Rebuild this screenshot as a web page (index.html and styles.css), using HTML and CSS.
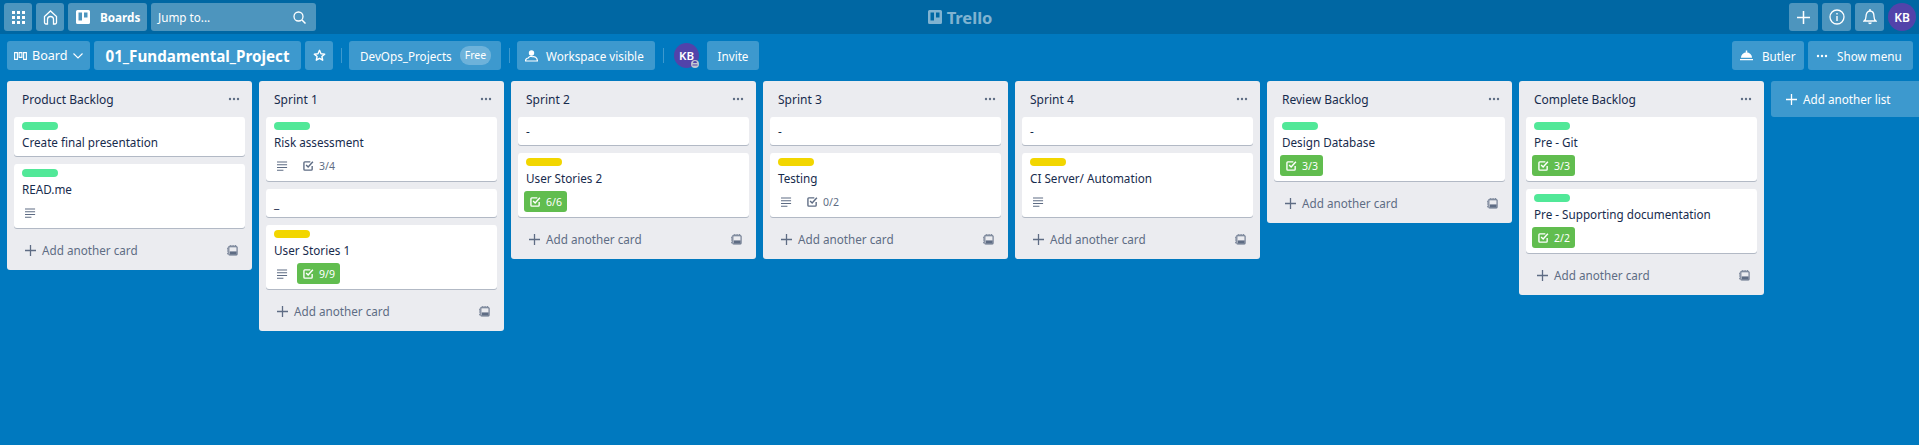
FILE: index.html
```html
<!DOCTYPE html>
<html lang="en">
    <head>
        <meta charset="UTF-8">
        <title>01_Fundamental_Project | Trello</title>
        <link rel="stylesheet" href="styles.css">
    </head>
    <body>
        <svg class="defs" width="0" height="0">
            <symbol id="i-desc" viewBox="0 0 12 12"><path d="M0 1h11v1.3H0zM0 4h11v1.3H0zM0 7h11v1.3H0zM0 10h7v1.3H0z" fill="currentColor"/></symbol>
            <symbol id="i-check" viewBox="0 0 12 12"><path d="M10 6.5V10a1 1 0 0 1-1 1H2a1 1 0 0 1-1-1V3a1 1 0 0 1 1-1h6" fill="none" stroke="currentColor" stroke-width="1.5"/><path d="M3.4 5.4 5.6 7.6 10.8 2" fill="none" stroke="currentColor" stroke-width="1.6"/></symbol>
            <symbol id="i-plus" viewBox="0 0 12 12"><path d="M5.3 0h1.4v5.3H12v1.4H6.7V12H5.3V6.7H0V5.3h5.3z" fill="currentColor"/></symbol>
            <symbol id="i-dots" viewBox="0 0 12 4"><circle cx="2" cy="2" r="1.2" fill="currentColor"/><circle cx="6" cy="2" r="1.2" fill="currentColor"/><circle cx="10" cy="2" r="1.2" fill="currentColor"/></symbol>
            <symbol id="i-template" viewBox="0 0 12 12"><path d="M2 2h8.500a1 1 0 0 1 .5.500v7.500a1 1 0 0 1-1 1H3a1 1 0 0 1-1-1z" fill="none" stroke="currentColor" stroke-width="1.100"/><path d="M3 7h7.500v3.500H3z" fill="currentColor"/><path d="M0 3h1v1H0zM0 5h1v1H0zM0 7h1v1H0zM0 9h1v1H0zM3 0h1v1H3zM5 0h1v1H5zM7 0h1v1H7zM9 0h1v1H9z" fill="currentColor"/></symbol>
            <symbol id="i-logo" viewBox="0 0 14 14"><path fill-rule="evenodd" d="M1.5 0h11A1.5 1.5 0 0 1 14 1.500v11a1.500 1.500 0 0 1-1.500 1.500h-11A1.500 1.500 0 0 1 0 12.500v-11A1.500 1.500 0 0 1 1.500 0zM2.500 2.500v8h3.500v-8zM8 2.500v5h3.500v-5z" fill="currentColor"/></symbol>
        </svg>

        <header class="topbar">
            <div class="topbar-side">
                <a class="top-btn square">
                    <svg width="13" height="13" viewBox="0 0 13 13"><path d="M0 0h3v3H0zM5 0h3v3H5zM10 0h3v3h-3zM0 5h3v3H0zM5 5h3v3H5zM10 5h3v3h-3zM0 10h3v3H0zM5 10h3v3H5zM10 10h3v3h-3z" fill="#fff"/></svg>
                </a>
                <a class="top-btn square">
                    <svg width="15" height="15" viewBox="0 0 15 15"><path d="M4.500 14H3a1.500 1.500 0 0 1-1.500-1.500V6.500L7.500 1l6 5.500v6A1.500 1.500 0 0 1 12 14h-1.500V9.500a3 3 0 0 0-6 0z" fill="none" stroke="#fff" stroke-width="1.300"/></svg>
                </a>
                <a class="top-btn boards">
                    <svg class="boards-icon" width="14" height="14"><use href="#i-logo"/></svg>
                    <b>Boards</b>
                </a>
                <div class="search">
                    <span>Jump to...</span>
                    <svg width="13" height="13" viewBox="0 0 13 13"><circle cx="5.500" cy="5.500" r="4.500" fill="none" stroke="#fff" stroke-width="1.300"/><path d="M9 9l3.500 3.500" stroke="#fff" stroke-width="1.500"/></svg>
                </div>
            </div>
            <div class="brand">
                <svg width="14" height="14"><use href="#i-logo"/></svg>
                <span>Trello</span>
            </div>
            <div class="topbar-side right">
                <a class="top-btn square wide"><svg width="13" height="13"><use href="#i-plus"/></svg></a>
                <a class="top-btn square wide">
                    <svg width="16" height="16" viewBox="0 0 16 16"><circle cx="8" cy="8" r="7" fill="none" stroke="#fff" stroke-width="1.300"/><path d="M7.300 7h1.400v5H7.300zM7.300 4h1.400v1.500H7.300z" fill="#fff"/></svg>
                </a>
                <a class="top-btn square wide">
                    <svg width="14" height="16" viewBox="0 0 14 16"><path d="M1 12c1.500-1 2-2 2-4.500C3 4.500 4.500 2 7 2s4 2.500 4 5.500c0 2.500.5 3.500 2 4.500z" fill="none" stroke="#fff" stroke-width="1.300"/><path d="M5.200 13.500h3.600a1.800 1.800 0 0 1-3.600 0zM6.300 0h1.400v2H6.300z" fill="#fff"/></svg>
                </a>
                <span class="avatar">KB</span>
            </div>
        </header>

        <nav class="boardbar">
            <div class="boardbar-side">
                <a class="bar-btn board-switch">
                    <svg width="13" height="8" viewBox="0 0 13 8"><path d="M.6.600h2.800v6.800H.6zM5.100.600h2.800v4.800H5.100zM9.600.600h2.800v6.800H9.600z" fill="none" stroke="#fff" stroke-width="1.100"/></svg>
                    <span>Board</span>
                    <svg width="10" height="6" viewBox="0 0 10 6"><path d="M.5.500 5 5 9.500.500" fill="none" stroke="#fff" stroke-width="1.100"/></svg>
                </a>
                <a class="bar-btn board-name">01_Fundamental_Project</a>
                <a class="bar-btn star">
                    <svg width="13" height="13" viewBox="0 0 13 13"><path d="M6.500 1.300 8 4.700l3.700.4-2.800 2.400.8 3.700-3.200-1.900-3.200 1.900.8-3.700L1.300 5.100 5 4.700z" fill="none" stroke="#fff" stroke-width="1.400" stroke-linejoin="round"/></svg>
                </a>
                <i class="sep"></i>
                <a class="bar-btn workspace">DevOps_Projects <span class="free">Free</span></a>
                <i class="sep"></i>
                <a class="bar-btn visible">
                    <svg width="13" height="12" viewBox="0 0 13 12"><circle cx="6.500" cy="3" r="2.700" fill="#fff"/><path d="M.6 11c-.2-1.800 1.200-3 2.600-3 .6-1.400 2.900-2.200 4.300-1.300 1.700-.6 5 .9 4.900 4.300z" fill="none" stroke="#fff" stroke-width="1.200"/></svg>
                    <span>Workspace visible</span>
                </a>
                <i class="sep"></i>
                <span class="member">
                    <span class="avatar small">KB</span>
                    <svg class="member-badge" width="8" height="8" viewBox="0 0 8 8"><circle cx="4" cy="4" r="4" fill="#c1c7d0"/><path d="M2 3a2 2 0 0 1 4 0zM1.500 4.500h5v1h-5z" fill="#5243aa"/></svg>
                </span>
                <a class="bar-btn invite">Invite</a>
            </div>
            <div class="boardbar-side">
                <a class="bar-btn butler">
                    <svg width="13" height="12" viewBox="0 0 14 12"><path d="M1 8a6 6 0 0 1 12 0zM6.200 0h1.600v2H6.200zM0 9.300h14v1.200H0z" fill="#fff"/></svg>
                    <span>Butler</span>
                </a>
                <a class="bar-btn show-menu">
                    <svg width="12" height="4"><use href="#i-dots"/></svg>
                    <span>Show menu</span>
                </a>
            </div>
        </nav>

        <main class="board">
            <section class="list">
                <div class="list-head"><h2>Product Backlog</h2><svg width="12" height="4"><use href="#i-dots"/></svg></div>
                <div class="card">
                    <div class="label green"></div>
                    <div class="title">Create final presentation</div>
                </div>
                <div class="card">
                    <div class="label green"></div>
                    <div class="title">READ.me</div>
                    <div class="badges"><span class="badge-desc"><svg width="11" height="12"><use href="#i-desc"/></svg></span></div>
                </div>
                <div class="list-foot"><svg class="add-plus" width="11" height="11"><use href="#i-plus"/></svg><span>Add another card</span><svg class="tpl" width="11" height="11"><use href="#i-template"/></svg></div>
            </section>

            <section class="list">
                <div class="list-head"><h2>Sprint 1</h2><svg width="12" height="4"><use href="#i-dots"/></svg></div>
                <div class="card">
                    <div class="label green"></div>
                    <div class="title">Risk assessment</div>
                    <div class="badges">
                        <span class="badge-desc"><svg width="11" height="12"><use href="#i-desc"/></svg></span>
                        <span class="badge-check"><svg width="11" height="11"><use href="#i-check"/></svg>3/4</span>
                    </div>
                </div>
                <div class="card">
                    <div class="title">_</div>
                </div>
                <div class="card">
                    <div class="label yellow"></div>
                    <div class="title">User Stories 1</div>
                    <div class="badges">
                        <span class="badge-desc"><svg width="11" height="12"><use href="#i-desc"/></svg></span>
                        <span class="badge-check done"><svg width="11" height="11"><use href="#i-check"/></svg>9/9</span>
                    </div>
                </div>
                <div class="list-foot"><svg class="add-plus" width="11" height="11"><use href="#i-plus"/></svg><span>Add another card</span><svg class="tpl" width="11" height="11"><use href="#i-template"/></svg></div>
            </section>

            <section class="list">
                <div class="list-head"><h2>Sprint 2</h2><svg width="12" height="4"><use href="#i-dots"/></svg></div>
                <div class="card">
                    <div class="title">-</div>
                </div>
                <div class="card">
                    <div class="label yellow"></div>
                    <div class="title">User Stories 2</div>
                    <div class="badges">
                        <span class="badge-check done"><svg width="11" height="11"><use href="#i-check"/></svg>6/6</span>
                    </div>
                </div>
                <div class="list-foot"><svg class="add-plus" width="11" height="11"><use href="#i-plus"/></svg><span>Add another card</span><svg class="tpl" width="11" height="11"><use href="#i-template"/></svg></div>
            </section>

            <section class="list">
                <div class="list-head"><h2>Sprint 3</h2><svg width="12" height="4"><use href="#i-dots"/></svg></div>
                <div class="card">
                    <div class="title">-</div>
                </div>
                <div class="card">
                    <div class="label yellow"></div>
                    <div class="title">Testing</div>
                    <div class="badges">
                        <span class="badge-desc"><svg width="11" height="12"><use href="#i-desc"/></svg></span>
                        <span class="badge-check"><svg width="11" height="11"><use href="#i-check"/></svg>0/2</span>
                    </div>
                </div>
                <div class="list-foot"><svg class="add-plus" width="11" height="11"><use href="#i-plus"/></svg><span>Add another card</span><svg class="tpl" width="11" height="11"><use href="#i-template"/></svg></div>
            </section>

            <section class="list">
                <div class="list-head"><h2>Sprint 4</h2><svg width="12" height="4"><use href="#i-dots"/></svg></div>
                <div class="card">
                    <div class="title">-</div>
                </div>
                <div class="card">
                    <div class="label yellow"></div>
                    <div class="title">CI Server/ Automation</div>
                    <div class="badges"><span class="badge-desc"><svg width="11" height="12"><use href="#i-desc"/></svg></span></div>
                </div>
                <div class="list-foot"><svg class="add-plus" width="11" height="11"><use href="#i-plus"/></svg><span>Add another card</span><svg class="tpl" width="11" height="11"><use href="#i-template"/></svg></div>
            </section>

            <section class="list">
                <div class="list-head"><h2>Review Backlog</h2><svg width="12" height="4"><use href="#i-dots"/></svg></div>
                <div class="card">
                    <div class="label green"></div>
                    <div class="title">Design Database</div>
                    <div class="badges">
                        <span class="badge-check done"><svg width="11" height="11"><use href="#i-check"/></svg>3/3</span>
                    </div>
                </div>
                <div class="list-foot"><svg class="add-plus" width="11" height="11"><use href="#i-plus"/></svg><span>Add another card</span><svg class="tpl" width="11" height="11"><use href="#i-template"/></svg></div>
            </section>

            <section class="list">
                <div class="list-head"><h2>Complete Backlog</h2><svg width="12" height="4"><use href="#i-dots"/></svg></div>
                <div class="card">
                    <div class="label green"></div>
                    <div class="title">Pre - Git</div>
                    <div class="badges">
                        <span class="badge-check done"><svg width="11" height="11"><use href="#i-check"/></svg>3/3</span>
                    </div>
                </div>
                <div class="card">
                    <div class="label green"></div>
                    <div class="title">Pre - Supporting documentation</div>
                    <div class="badges">
                        <span class="badge-check done"><svg width="11" height="11"><use href="#i-check"/></svg>2/2</span>
                    </div>
                </div>
                <div class="list-foot"><svg class="add-plus" width="11" height="11"><use href="#i-plus"/></svg><span>Add another card</span><svg class="tpl" width="11" height="11"><use href="#i-template"/></svg></div>
            </section>

            <a class="add-list"><svg width="11" height="11"><use href="#i-plus"/></svg>Add another list</a>
        </main>
    </body>
</html>
```

FILE: styles.css
```css
body {
    margin: 0;
    height: 445px;
    overflow: hidden;
    background-color: #0079bf;
    color: #172b4d;
    font-family: "Noto Sans", "Open Sans", sans-serif;
    font-size: 11.7px;
}

a {
    color: #fff;
}

.defs {
    position: absolute;
}

/* top bar */
.topbar {
    display: grid;
    grid-template-columns: 1fr auto 1fr;
    align-items: center;
    height: 34px;
    padding: 0 3px 0 4px;
    background-color: #0067a3;
}

.topbar-side {
    display: flex;
    align-items: center;
    gap: 4px;
}

.topbar-side.right {
    justify-content: flex-end;
}

.top-btn {
    display: flex;
    align-items: center;
    height: 28px;
    border-radius: 3px;
    background-color: rgba(255, 255, 255, 0.3);
    color: #fff;
}

.square {
    justify-content: center;
    width: 28px;
}

.wide {
    width: 29px;
}

.boards {
    width: 79px;
    box-sizing: border-box;
    padding-left: 8px;
}

.boards-icon {
    margin-right: 10px;
}

.search {
    display: flex;
    align-items: center;
    justify-content: space-between;
    width: 165px;
    height: 28px;
    box-sizing: border-box;
    padding: 0 10px 0 7px;
    border-radius: 3px;
    background-color: rgba(255, 255, 255, 0.3);
    color: #fff;
}

.brand {
    display: flex;
    align-items: center;
    gap: 5px;
    color: rgba(255, 255, 255, 0.5);
    font-size: 16.5px;
    font-weight: 700;
}

.avatar {
    display: flex;
    align-items: center;
    justify-content: center;
    width: 28px;
    height: 28px;
    border-radius: 50%;
    background-color: #5243aa;
    color: #fff;
    font-size: 12px;
    font-weight: 600;
}

.avatar.small {
    width: 25px;
    height: 25px;
    font-size: 11.5px;
}

/* board bar */
.boardbar {
    display: flex;
    justify-content: space-between;
    padding: 7px 6px 11px 7px;
}

.boardbar-side {
    display: flex;
    align-items: center;
    gap: 4px;
}

.bar-btn {
    display: flex;
    align-items: center;
    height: 29px;
    box-sizing: border-box;
    border-radius: 3px;
    background-color: rgba(255, 255, 255, 0.24);
}

.board-switch {
    width: 83px;
    padding-left: 7px;
    gap: 5px;
}

.board-switch span {
    width: 32px;
    margin-right: 4px;
    font-size: 12.6px;
}

.board-name {
    justify-content: center;
    width: 207px;
    font-size: 15.2px;
    font-weight: 700;
}

.star {
    justify-content: center;
    width: 28px;
}

.sep {
    width: 1px;
    height: 15px;
    margin: 0 3px 0 4px;
    background-color: rgba(255, 255, 255, 0.24);
}

.workspace {
    justify-content: space-between;
    width: 152px;
    padding: 0 10px 0 11px;
}

.free {
    width: 31px;
    border-radius: 9px;
    background-color: rgba(255, 255, 255, 0.25);
    font-size: 10.5px;
    line-height: 19px;
    text-align: center;
}

.visible {
    width: 138px;
    padding-left: 8px;
    gap: 8px;
}

.member {
    position: relative;
    display: flex;
    margin: 0 4px 0 3px;
}

.member-badge {
    position: absolute;
    right: 0;
    bottom: 0;
}

.invite {
    justify-content: center;
    width: 52px;
}

.butler {
    width: 72px;
    padding-left: 8px;
    gap: 9px;
}

.show-menu {
    width: 105px;
    padding-left: 8px;
    gap: 9px;
}

/* lists */
.board {
    display: flex;
    align-items: flex-start;
    gap: 7px;
    padding-left: 7px;
}

.list {
    flex: 0 0 245px;
    box-sizing: border-box;
    padding: 0 7px;
    border-radius: 3px;
    background-color: #ebecf0;
}

.list-head {
    display: flex;
    align-items: center;
    justify-content: space-between;
    height: 36px;
    padding: 0 5px 0 8px;
    color: #5e6c84;
}

.list-head h2 {
    margin: 0;
    color: #172b4d;
    font-size: 12px;
    font-weight: 400;
}

.card {
    margin-bottom: 8px;
    padding: 6px 8px 4px;
    border-radius: 3px;
    background-color: #fff;
    box-shadow: 0 1px 0 rgba(9, 30, 66, 0.25);
}

.label {
    width: 36px;
    height: 8px;
    margin: -1px 0 4px;
    border-radius: 4px;
}

.green {
    background-color: #51e898;
}

.yellow {
    background-color: #f2d600;
}

.title {
    margin: -1px 0 1px;
    line-height: 18px;
}

.badges {
    display: flex;
    align-items: center;
    height: 21px;
    margin: 4px 0 1px -2px;
    color: #5e6c84;
    font-size: 10.5px;
}

.badge-desc {
    display: flex;
    box-sizing: border-box;
    width: 25px;
    padding-left: 5px;
}

.badge-check {
    display: flex;
    align-items: center;
    gap: 5px;
    width: 43px;
    height: 21px;
    box-sizing: border-box;
    padding-left: 6px;
    border-radius: 3px;
}

.done {
    background-color: #61bd4f;
    color: #fff;
}

.list-foot {
    display: flex;
    align-items: center;
    height: 28px;
    margin-bottom: 6px;
    padding: 0 7px 0 11px;
    color: #5e6c84;
}

.add-plus {
    margin-right: 6px;
}

.tpl {
    margin-left: auto;
}

.add-list {
    display: flex;
    flex: 1;
    align-items: center;
    gap: 6px;
    height: 36px;
    box-sizing: border-box;
    padding-left: 15px;
    border-radius: 3px 0 0 3px;
    background-color: rgba(255, 255, 255, 0.24);
}
```
